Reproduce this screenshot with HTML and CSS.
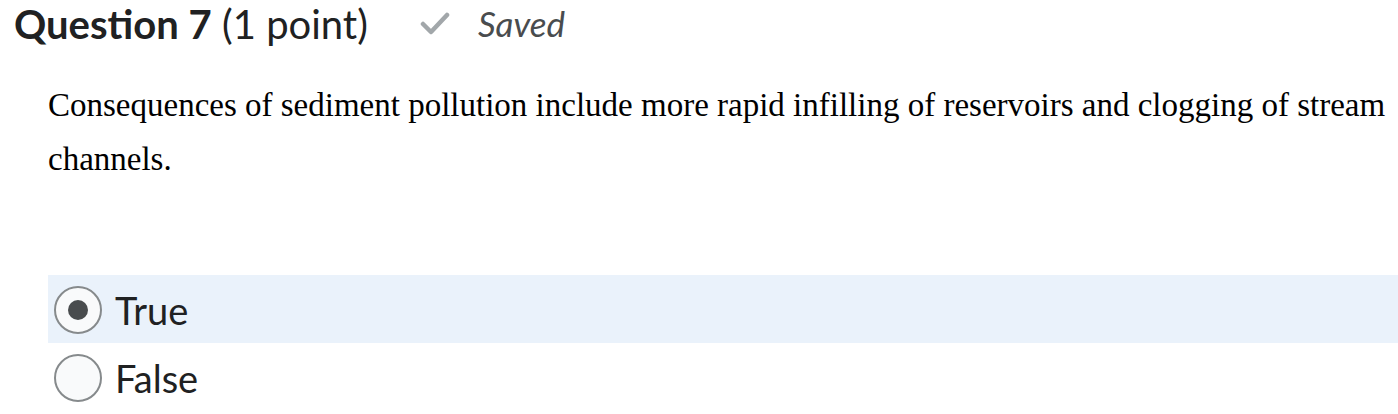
FILE: index.html
```html
<!DOCTYPE html>
<html lang="en">
<head>
    <meta charset="UTF-8">
    <meta name="viewport" content="width=device-width, initial-scale=1.0">
    <title>Question 7</title>
    <link rel="stylesheet" href="styles.css">
</head>
<body>

    <div class="question">
        <div class="question-header">
            <h2 class="question-title"><strong>Question 7</strong> (1 point)</h2>
            <div class="save-status">
                <svg class="check-icon" width="30" height="24" viewBox="0 0 30 24">
                    <path d="M3 13 L11 21 L27 4" fill="none" stroke="#a2a7aa" stroke-width="4.5" stroke-linecap="round" stroke-linejoin="round"/>
                </svg>
                <span class="saved-text">Saved</span>
            </div>
        </div>

        <div class="question-body">
            <p class="question-text">Consequences of sediment pollution include more rapid infilling of reservoirs and clogging of stream channels.</p>

            <div class="answers">
                <label class="answer selected">
                    <span class="radio checked"></span>
                    <span class="answer-text">True</span>
                </label>
                <label class="answer">
                    <span class="radio"></span>
                    <span class="answer-text">False</span>
                </label>
            </div>
        </div>
    </div>

</body>
</html>
```

FILE: styles.css
```css
* { margin: 0; padding: 0; box-sizing: border-box; }
body { background: #fff; color: #202122; font-family: Lato, "Open Sans", sans-serif; overflow: hidden; }

.question-header { display: flex; align-items: center; padding-left: 14px; height: 50px; }
.question-title { font-size: 40px; font-weight: normal; line-height: 48px; color: #202122; margin-top: -2px; }
.question-title strong { font-weight: bold; }

.save-status { display: flex; align-items: center; margin-left: 52px; gap: 28px; margin-top: -4px; }
.check-icon { display: block; }
.saved-text { font-style: italic; font-size: 35px; color: #494c4e; }

.question-body { padding-left: 48px; }
.question-text { font-family: "Liberation Serif", "Times New Roman", serif; font-size: 33px; line-height: 54px; color: #000; margin-top: 28px; }

.answers { margin-top: 89px; }
.answer { display: flex; align-items: center; height: 68px; padding: 2px 0 0 6px; }
.answer.selected { background: #eaf2fb; }
.answer-text { font-size: 38px; color: #202122; margin-left: 13px; }

.radio { width: 48px; height: 48px; border: 2px solid #868a8c; border-radius: 50%; background: #f9fafb; display: flex; align-items: center; justify-content: center; }
.radio.checked::after { content: ""; width: 20px; height: 20px; border-radius: 50%; background: #494c4e; }
```
